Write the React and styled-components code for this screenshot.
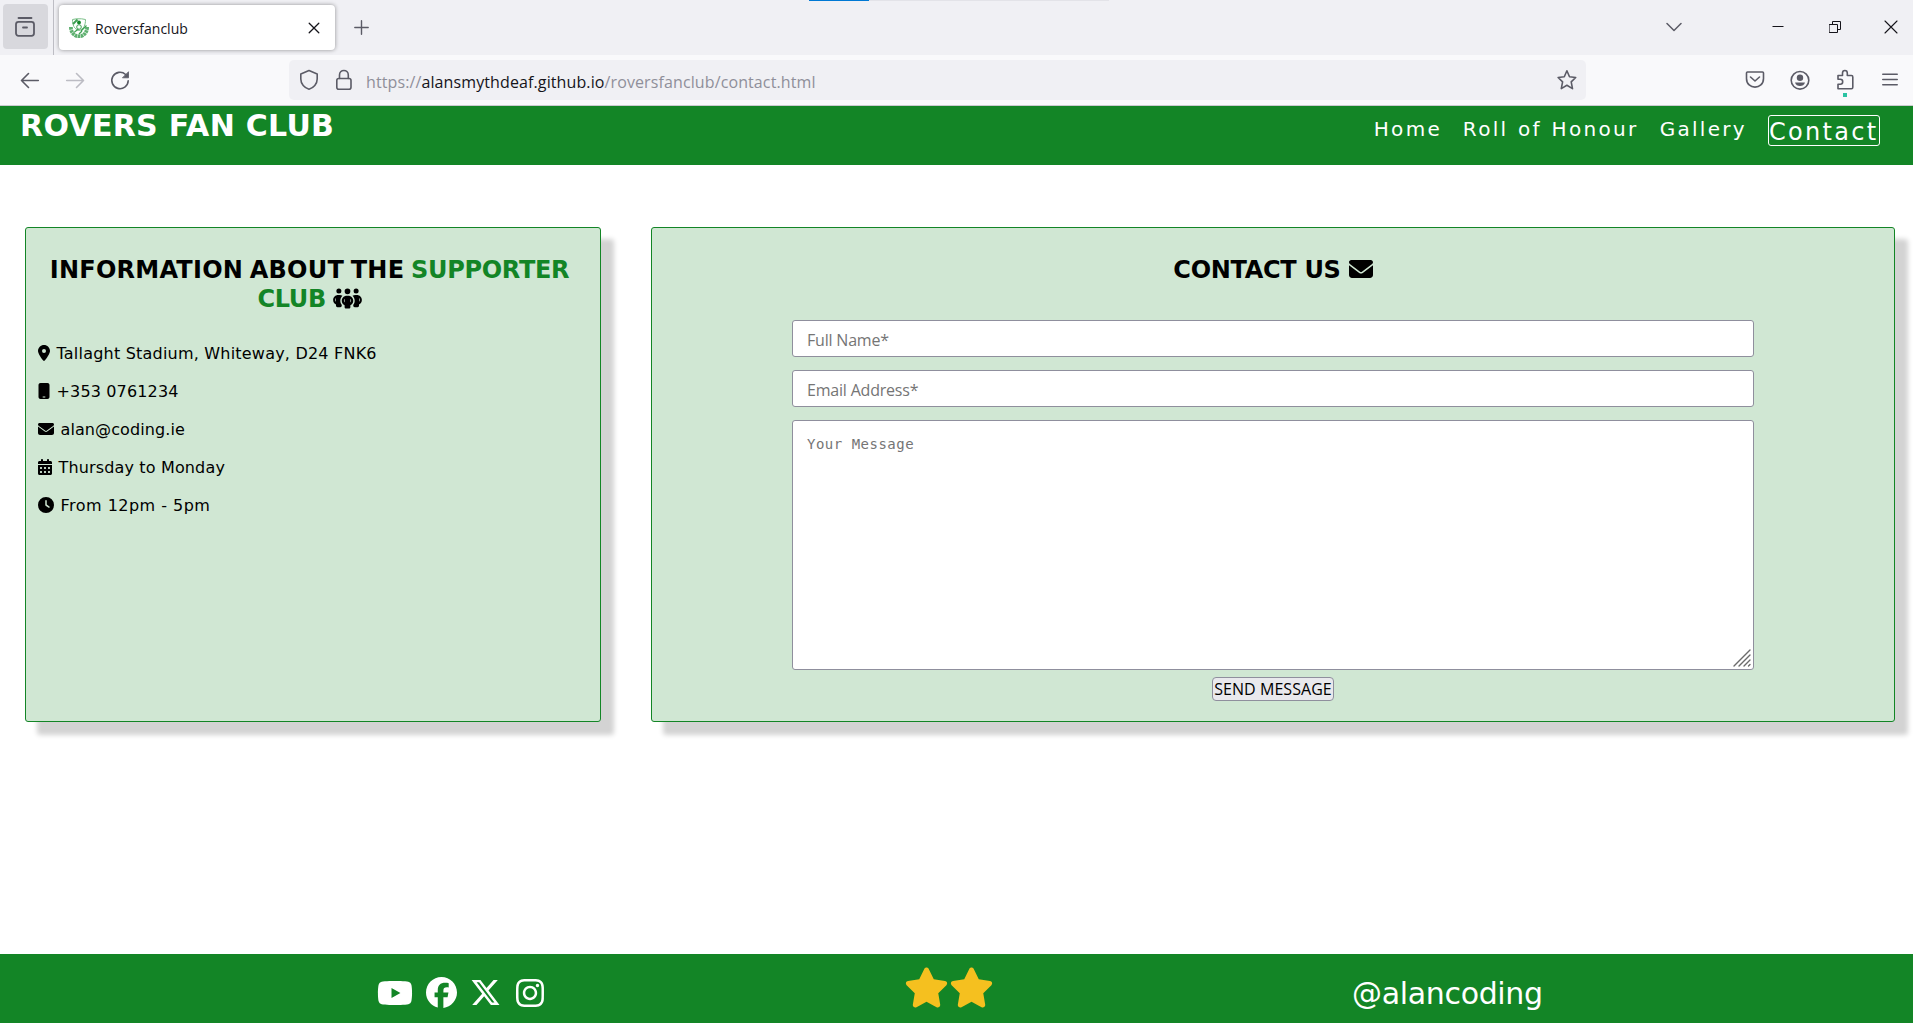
import React from "react";
import styled, { createGlobalStyle } from "styled-components";
import { FaPeopleGroup, FaLocationDot, FaMobile, FaEnvelope, FaCalendarDays, FaClock, FaYoutube, FaFacebook, FaXTwitter, FaInstagram, FaStar } from "react-icons/fa6";

const green = "#138526";

const GlobalStyle = createGlobalStyle`
  * { box-sizing: border-box; }
  body { margin: 0; background: #fff; overflow: hidden; }
`;

const Window = styled.div`
  display: flex;
  flex-direction: column;
  height: 1023px;
  font-family: Verdana, "DejaVu Sans", sans-serif;
`;

const TabStrip = styled.div`
  display: flex;
  align-items: flex-start;
  height: 55px;
  background: #f0f0f4;
  color: #5b5b66;
  font-family: "Segoe UI", "Open Sans", sans-serif;
`;
const ViewButton = styled.div`
  display: flex;
  align-items: center;
  justify-content: center;
  width: 45px;
  height: 45px;
  margin: 4px 5px 0 3px;
  padding: 1px 1px 0 0;
  border-radius: 4px;
  background: #d8d8dd;
`;
const Divider = styled.div`
  width: 1px;
  height: 55px;
  background: #bdbdc4;
`;
const Tab = styled.div`
  display: flex;
  align-items: center;
  width: 276px;
  height: 45px;
  margin: 5px 0 0 5px;
  padding: 0 15px 0 10px;
  border-radius: 4px;
  background: #fff;
  box-shadow: 0 0 4px rgba(0, 0, 0, 0.4);
  color: #15141a;
`;
const TabTitle = styled.span`
  flex: 1;
  margin-left: 6px;
  padding-top: 1px;
  font-size: 14px;
`;
const NewTab = styled.div`
  margin: 20px 0 0 19px;
  line-height: 0;
`;
const Progress = styled.div`
  display: flex;
  width: 300px;
  height: 1px;
  margin-left: 440px;
  background: #e3e3e8;
`;
const ProgressFill = styled.div`
  width: 60px;
  height: 1px;
  background: #0078d4;
`;
const WindowButtons = styled.div`
  display: flex;
  align-items: center;
  margin: 19px 15px 0 auto;
  height: 16px;
  color: #15141a;
`;
const Gap = styled.span`
  width: ${(p) => p.$w}px;
  flex: none;
`;

const Toolbar = styled.div`
  display: flex;
  align-items: center;
  height: 51px;
  padding: 0 11px 0 18px;
  background: #f9f9fb;
  border-bottom: 1px solid #cbcbd0;
  color: #5b5b66;
`;
const NavButtons = styled.div`
  display: flex;
  gap: 21px;
  width: 271px;
`;
const AddressBar = styled.div`
  display: flex;
  align-items: center;
  width: 1297px;
  height: 40px;
  padding: 0 7px 0 8px;
  border-radius: 5px;
  background: #f0f0f4;
`;
const Address = styled.div`
  flex: 1;
  margin-left: 10px;
  padding-top: 3px;
  font-family: "Segoe UI", "Open Sans", sans-serif;
  font-size: 16px;
  letter-spacing: 0.11px;
  color: #8f8f9a;
  b { font-weight: 400; color: #15141a; }
`;
const Tools = styled.div`
  display: flex;
  gap: 21px;
  margin-left: auto;
`;
const Extension = styled.div`
  position: relative;
  line-height: 0;
  &::after {
    content: "";
    position: absolute;
    left: 10px;
    top: 25px;
    width: 4px;
    height: 4px;
    background: #2ac3a2;
  }
`;

const Header = styled.header`
  display: flex;
  justify-content: space-between;
  align-items: flex-start;
  height: 59px;
  padding: 0 33px 0 20px;
  background: ${green};
  color: #fff;
`;
const Brand = styled.h1`
  margin: 2px 0 0;
  font-size: 30px;
  line-height: 36px;
  letter-spacing: 0.3px;
`;
const Menu = styled.nav`
  display: flex;
  align-items: flex-start;
  padding-top: 9px;
`;
const MenuLink = styled.a`
  margin-right: ${(p) => p.$gap || 0}px;
  padding-top: 2px;
  font-size: 20px;
  line-height: 24px;
  letter-spacing: 2.3px;
  word-spacing: 1px;
`;
const CurrentLink = styled.a`
  width: 112px;
  height: 31px;
  border: 1px solid #fff;
  border-radius: 3px;
  font-size: 24px;
  line-height: 32px;
  letter-spacing: 2.3px;
  white-space: nowrap;
`;

const Main = styled.main`
  display: flex;
  flex: 1;
  align-items: flex-start;
  gap: 50px;
  padding: 62px 18px 0 25px;
`;
const Card = styled.section`
  width: ${(p) => p.$width}px;
  height: 495px;
  border: 1px solid ${green};
  border-radius: 3px;
  background: #d0e7d3;
  box-shadow: 12.8px 12.8px 5px #d3d3d3;
`;
const CardTitle = styled.h2`
  margin: 28px ${(p) => p.$right}px 0 10px;
  font-size: 24px;
  line-height: 29px;
  letter-spacing: ${(p) => p.$spacing}px;
  word-spacing: ${(p) => p.$word || 0}px;
  text-align: center;
  color: #000;
  em { font-style: normal; letter-spacing: -0.3px; color: ${green}; }
  svg { margin: -5px 0; vertical-align: 2px; }
`;
const Details = styled.ul`
  margin: 20px 0 0 12px;
  padding: 0;
  list-style: none;
`;
const Detail = styled.li`
  display: flex;
  align-items: center;
  height: 38px;
  gap: 6.5px;
  font-size: 16px;
  letter-spacing: ${(p) => p.$spacing}px;
  color: #000;
`;
const Form = styled.form`
  display: flex;
  flex-direction: column;
  width: 962px;
  margin: 35px 0 0 140px;
`;
const Field = styled.input`
  height: 37px;
  margin: 0 0 13px;
  padding: 2px 14px 0;
  border: 1px solid #8f8f9d;
  border-radius: 3px;
  background: #fff;
  font-family: "Segoe UI", "Open Sans", sans-serif;
  font-size: 16px;
  letter-spacing: -0.2px;
  &::placeholder { color: #757575; opacity: 1; }
`;
const MessageWrap = styled.div`
  position: relative;
  height: 250px;
  svg { position: absolute; right: 3px; bottom: 3px; }
`;
const Message = styled.textarea`
  display: block;
  width: 962px;
  height: 250px;
  padding: 15px 14px;
  border: 1px solid #8f8f9d;
  border-radius: 3px;
  resize: none;
  background: #fff;
  font-family: Consolas, "DejaVu Sans Mono", monospace;
  font-size: 14px;
  letter-spacing: 0.5px;
  &::placeholder { color: #757575; opacity: 1; }
`;
const Send = styled.button`
  align-self: center;
  width: 122px;
  height: 24px;
  margin-top: 7px;
  padding: 1px 0 0;
  border: 1px solid #8f8f9d;
  border-radius: 4px;
  background: #e9e9ed;
  font-family: "Segoe UI", "Open Sans", sans-serif;
  font-size: 16px;
  line-height: 21px;
  letter-spacing: 0.05px;
  white-space: nowrap;
  color: #000;
`;

const Footer = styled.footer`
  display: flex;
  align-items: center;
  height: 69px;
  padding: 0 0 0 376.5px;
  background: ${green};
  color: #fff;
`;
const Social = styled.div`
  display: flex;
  align-items: center;
  gap: 13.2px;
  width: 527.5px;
  padding-top: 8px;
`;
const Stars = styled.div`
  display: flex;
  width: 448px;
  padding-bottom: 3px;
  color: #f5c01f;
`;
const Handle = styled.div`
  padding-top: 11px;
  font-size: 30px;
  line-height: 36px;
  letter-spacing: -0.33px;
`;

const Icon = ({ w = 24, h = 24, sw = 1.6, children }) => (
  <svg width={w} height={h} viewBox={`0 0 ${w} ${h}`} fill="none" stroke="currentColor" strokeWidth={sw} strokeLinecap="round" strokeLinejoin="round">{children}</svg>
);

const Crest = () => (
  <svg width="20" height="20" viewBox="0 0 20 20" fill="none" stroke="#3fa053" strokeWidth="1">
    <path d="M3.5 1.5C3.5 7 5 11 10 12.5C15 11 16.5 7 16.5 1.5L12.5.8H7.5Z" stroke="#7cbf89" />
    <path d="M1.9 9C1.9 21.4 18.1 21.4 18.1 9" strokeWidth="3.8" strokeDasharray="2.6 .5" stroke="#5fb070" />
    <path d="M4 6L8.5 1.5" strokeWidth="2" />
    <path d="M12 13L17.5 7.5M5.5 14L9.5 11M10 16L13 13" strokeWidth="1.3" />
    <circle cx="10" cy="9" r="2.3" />
    <circle cx="10" cy="4.4" r="1.9" fill="#16862b" stroke="none" />
  </svg>
);

export default function App() {
  return (
    <Window>
      <GlobalStyle />
      <TabStrip>
        <ViewButton><Icon w={20} h={20} sw={1.8}><path d="M3.5 1H16.5" /><rect x="1" y="4.8" width="18" height="14" rx="2.5" /><path d="M8 10.5H12" /></Icon></ViewButton>
        <Divider />
        <Tab>
          <Crest />
          <TabTitle>Roversfanclub</TabTitle>
          <Icon w={12} h={12} sw={1.3}><path d="M1.2 1.2L10.8 10.8M10.8 1.2L1.2 10.8" /></Icon>
        </Tab>
        <NewTab><Icon w={15} h={15} sw={1.4}><path d="M7.5.8V14.2M.8 7.5H14.2" /></Icon></NewTab>
        <Progress><ProgressFill /></Progress>
        <WindowButtons>
          <Icon w={16} h={10} sw={1.5}><path d="M1 1.5L8 8.5L15 1.5" stroke="#5b5b66" /></Icon>
          <Gap $w={90} />
          <Icon w={12} h={12} sw={1}><path d="M.5 5.5H11.5" strokeLinecap="butt" /></Icon>
          <Gap $w={45} />
          <Icon w={12} h={12} sw={1}><path d="M.5 3.5H8.5V11.5H.5ZM3.5 3.5V.5H11.5V8.5H8.5" /></Icon>
          <Gap $w={43} />
          <Icon w={14} h={14} sw={1.1}><path d="M1 1L13 13M13 1L1 13" /></Icon>
        </WindowButtons>
      </TabStrip>
      <Toolbar>
        <NavButtons>
          <Icon><path d="M20.3 12.5H3.5M10.5 5.5L3.5 12.5L10.5 19.5" /></Icon>
          <Icon><g stroke="#bcbcc3"><path d="M3.7 12.5H20.5M13.5 5.5L20.5 12.5L13.5 19.5" /></g></Icon>
          <Icon><path d="M20.2 12.8A8.2 8.2 0 1 1 17.6 6.5" /><path d="M20.5 4.1V9.8H14.8Z" fill="currentColor" strokeWidth=".8" /></Icon>
        </NavButtons>
        <AddressBar>
          <Icon><path d="M12 2.5L20.2 5.9V11C20.2 16 16.5 20 12 21.2C7.5 20 3.8 16 3.8 11V5.9Z" /></Icon>
          <Gap $w={11} />
          <Icon><rect x="4.8" y="10.5" width="14.2" height="10.7" rx="2" /><path d="M7.5 10.5V7C7.5 1 16.3 1 16.3 7V10.5" /></Icon>
          <Address>https://<b>alansmythdeaf.github.io</b>/roversfanclub/contact.html</Address>
          <Icon><path d="M11.9 2.8L14.5 8.8L20.7 9.5L16.2 13.9L17.5 20.6L11.9 17.3L6.3 20.6L7.6 13.9L3.1 9.5L9.3 8.8Z" /></Icon>
        </AddressBar>
        <Tools>
          <Icon><path d="M4.5 4H19.5Q20.5 4 20.5 5V10.5C20.5 22 3.5 22 3.5 10.5V5Q3.5 4 4.5 4ZM7.5 9L12 13L16.5 9" /></Icon>
          <Icon><circle cx="12" cy="12.3" r="8.8" /><g fill="currentColor" stroke="none"><circle cx="12" cy="9.8" r="3.2" /><path d="M7 14.5H17C16 19.3 8 19.3 7 14.5Z" /></g></Icon>
          <Extension><Icon><path d="M5 20.8V16.3H7.3C10.5 16.3 10.5 11.3 7.3 11.3H5V7.5H9.5V5C9.5 1.6 14.3 1.6 14.3 5V7.5H18.5Q19.8 7.5 19.8 9V19.3Q19.8 20.8 18.5 20.8Z" /></Icon></Extension>
          <Icon><path d="M4.8 6.3H19.2M4.8 11.5H19.2M4.8 16.7H19.2" /></Icon>
        </Tools>
      </Toolbar>
      <Header>
        <Brand>ROVERS FAN CLUB</Brand>
        <Menu>
          <MenuLink $gap={20.8}>Home</MenuLink>
          <MenuLink $gap={21.2}>Roll of Honour</MenuLink>
          <MenuLink $gap={21}>Gallery</MenuLink>
          <CurrentLink>Contact</CurrentLink>
        </Menu>
      </Header>
      <Main>
        <Card $width={576}>
          <CardTitle $right={17} $spacing={0.25} $word={-2}>INFORMATION ABOUT THE <em>SUPPORTER<br />CLUB</em> <FaPeopleGroup style={{ width: 29, height: 23 }} /></CardTitle>
          <Details>
            <Detail $spacing={0.21}><FaLocationDot size={16} style={{ width: 12 }} />Tallaght Stadium, Whiteway, D24 FNK6</Detail>
            <Detail $spacing={0.15}><FaMobile size={16} style={{ width: 12 }} />+353 0761234</Detail>
            <Detail $spacing={0.1}><FaEnvelope size={16} />alan@coding.ie</Detail>
            <Detail $spacing={0.15}><FaCalendarDays size={16} style={{ width: 14 }} />Thursday to Monday</Detail>
            <Detail $spacing={0.48}><FaClock size={16} />From 12pm - 5pm</Detail>
          </Details>
        </Card>
        <Card $width={1244}>
          <CardTitle $right={10} $spacing={-0.3}>CONTACT US <FaEnvelope size={24} /></CardTitle>
          <Form>
            <Field placeholder="Full Name*" />
            <Field placeholder="Email Address*" />
            <MessageWrap>
              <Message placeholder="Your Message" />
              <Icon w={18} h={18} sw={1.4}><path d="M1 17L17 1M6 17L17 6M11 17L17 11M15.5 17L17 15.5" stroke="#6b6b6b" /></Icon>
            </MessageWrap>
            <Send type="button">SEND MESSAGE</Send>
          </Form>
        </Card>
      </Main>
      <Footer>
        <Social><FaYoutube size={36} /><FaFacebook size={31} /><FaXTwitter size={31} /><FaInstagram size={32} /></Social>
        <Stars><FaStar size={45} /><FaStar size={45} /></Stars>
        <Handle>@alancoding</Handle>
      </Footer>
    </Window>
  );
}
